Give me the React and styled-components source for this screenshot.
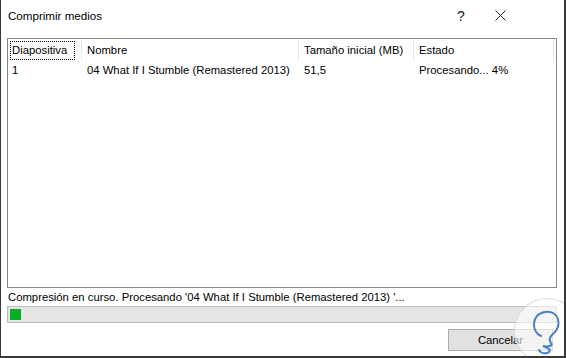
import styled, { createGlobalStyle } from "styled-components"

const GlobalStyle = createGlobalStyle`
  html, body {
    margin: 0;
    padding: 0;
    background: #ffffff;
  }
  * {
    box-sizing: border-box;
  }
`

const Window = styled.div`
  position: relative;
  width: 566px;
  height: 358px;
  display: flex;
  overflow: hidden;
  flex-direction: column;
  background-color: #fff;
  border-left: 1px solid #3a3a3a;
  border-right: 2px solid #3a3a3a;
  border-bottom: 2px solid #3a3a3a;
  font-family: "Liberation Sans", Arial, sans-serif;
  font-size: 11.3px;
  color: #000;
`

const TitleBar = styled.div`
  height: 31px;
  display: flex;
  flex-shrink: 0;
  align-items: center;
  padding-left: 7px;
  p {
    margin: 0;
    font-size: 11.6px;
  }
`

const Controls = styled.div`
  display: flex;
  margin-left: auto;
  margin-right: 38px;
  align-items: center;
`

const CtrlButton = styled.div`
  width: ${(props) => props.w}px;
  height: 30px;
  display: flex;
  font-size: 14px;
  align-items: center;
  justify-content: center;
  color: #222;
`

const Body = styled.div`
  flex: 1;
  display: flex;
  flex-direction: column;
  padding: 7px 7px 0 6px;
`

const List = styled.div`
  height: 250px;
  flex-shrink: 0;
  background: #fff;
  border: 1px solid #828790;
  padding-top: 1px;
`

const Row = styled.div`
  display: flex;
  height: ${(props) => (props.header ? 20 : 18)}px;
  margin-top: ${(props) => (props.header ? 0 : 1)}px;
`

const Cell = styled.div`
  width: ${(props) => props.w}px;
  display: flex;
  align-items: center;
  padding-left: ${(props) => props.pad || 5}px;
  white-space: nowrap;
  border-right: ${(props) =>
    props.sep ? "1px solid #e5e5e5" : "1px solid transparent"};
`

const FocusLabel = styled.span`
  padding: 2px 7px 2px 1px;
  margin-left: -2px;
  outline: 1px dotted #000;
  line-height: 13px;
`

const Status = styled.p`
  margin: 2px 0 0 1px;
  height: 15px;
  line-height: 15px;
  font-size: 11.3px;
`

const Progress = styled.div`
  height: 17px;
  flex-shrink: 0;
  margin-top: 1px;
  padding: 2px;
  background: #e6e6e6;
  border: 1px solid #bcbcbc;
`

const Fill = styled.div`
  height: 100%;
  background: #06b025;
`

const Footer = styled.div`
  display: flex;
  justify-content: flex-end;
  padding-top: 6px;
  padding-right: 4px;
`

const Button = styled.button`
  width: 105px;
  height: 22px;
  padding: 0;
  font-family: inherit;
  font-size: 11.3px;
  color: #000;
  background: #e1e1e1;
  border: 1px solid #adadad;
`

const Watermark = styled.div`
  position: absolute;
  right: -16px;
  bottom: -8px;
  width: 66px;
  height: 66px;
  border-radius: 50%;
  background: rgba(255, 255, 255, 0.6);
  border: 1px solid rgba(200, 205, 215, 0.7);
  display: flex;
  align-items: center;
  justify-content: center;
`

const columns = [74, 217, 115, 140]

const App = () => {
  const progress = 4
  return (
    <>
      <GlobalStyle />
      <Window>
        <TitleBar>
          <p>Comprimir medios</p>
          <Controls>
            <CtrlButton w={26}>?</CtrlButton>
            <CtrlButton w={52}>
              <svg width="11" height="11" viewBox="0 0 11 11">
                <path
                  d="M0.5 0.5 L10.5 10.5 M10.5 0.5 L0.5 10.5"
                  stroke="#222"
                  strokeWidth="1"
                />
              </svg>
            </CtrlButton>
          </Controls>
        </TitleBar>
        <Body>
          <List>
            <Row header>
              <Cell w={columns[0]} sep pad={5}>
                <FocusLabel>Diapositiva</FocusLabel>
              </Cell>
              <Cell w={columns[1]} sep>
                Nombre
              </Cell>
              <Cell w={columns[2]} sep>
                Tamaño inicial (MB)
              </Cell>
              <Cell w={columns[3]} sep>
                Estado
              </Cell>
            </Row>
            <Row>
              <Cell w={columns[0]} pad={4}>
                1
              </Cell>
              <Cell w={columns[1]}>04 What If I Stumble (Remastered 2013)</Cell>
              <Cell w={columns[2]}>51,5</Cell>
              <Cell w={columns[3]}>Procesando... 4%</Cell>
            </Row>
          </List>
          <Status>
            Compresión en curso. Procesando '04 What If I Stumble (Remastered
            2013) '...
          </Status>
          <Progress>
            <Fill style={{ width: `${(progress / 100) * 275}px` }} />
          </Progress>
          <Footer>
            <Button>Cancelar</Button>
          </Footer>
        </Body>
        <Watermark>
          <svg width="40" height="50" viewBox="0 0 40 50">
            <path
              d="M14 30 C4 26 4 8 18 6 C32 4 36 20 26 28 C22 31 22 35 24 37 C27 40 20 41 16 40 C22 43 26 44 20 47 C16 48 13 46 12 44"
              fill="none"
              stroke="#4a7fc0"
              strokeWidth="2"
              strokeLinecap="round"
            />
          </svg>
        </Watermark>
      </Window>
    </>
  )
}

export default App
